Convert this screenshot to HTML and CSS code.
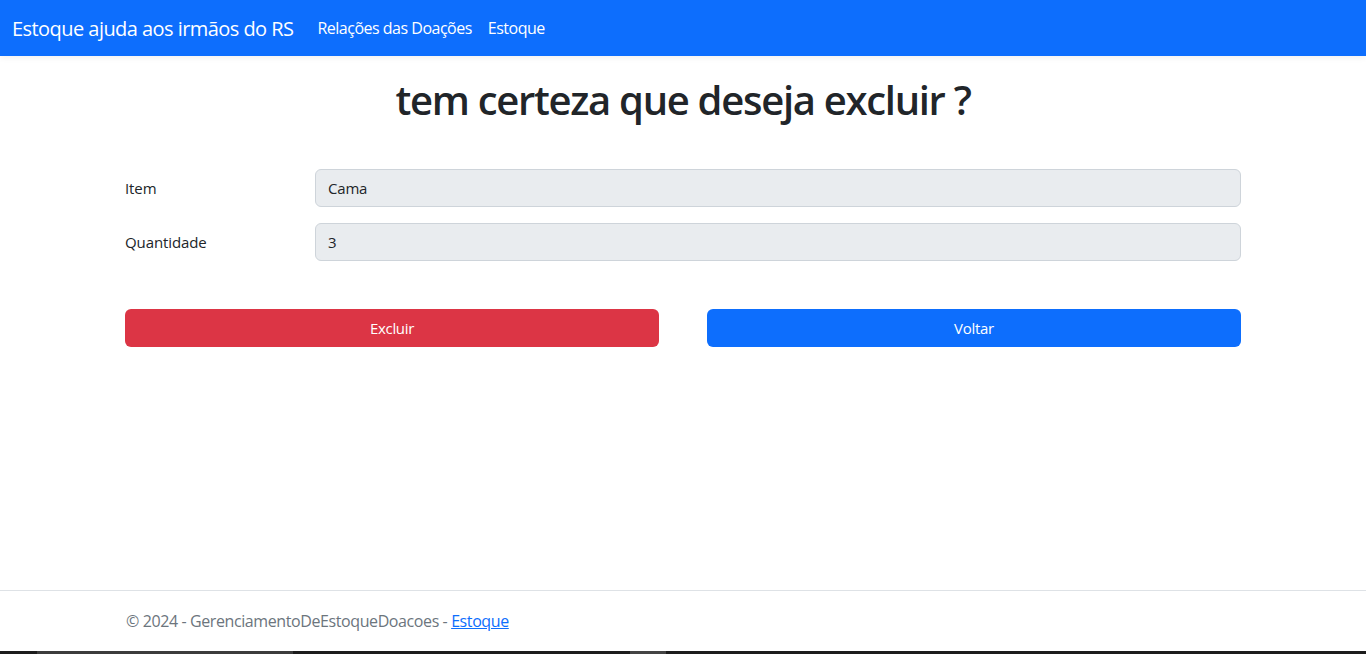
FILE: index.html
```html
<!DOCTYPE html>
<html lang="pt-br">
<head>
<meta charset="utf-8">
<title>Excluir - Estoque</title>
<link rel="stylesheet" href="styles.css">
</head>
<body>
<div class="page">
  <header class="navbar">
    <a class="brand" href="#">Estoque ajuda aos irmãos do RS</a>
    <nav class="nav">
      <a class="nav-link" href="#">Relações das Doações</a>
      <a class="nav-link" href="#">Estoque</a>
    </nav>
  </header>
  <main class="main">
    <div class="container">
      <h1 class="title">tem certeza que deseja excluir ?</h1>
      <form class="form">
        <div class="row">
          <label class="label">Item</label>
          <div class="input">Cama</div>
        </div>
        <div class="row">
          <label class="label">Quantidade</label>
          <div class="input">3</div>
        </div>
        <div class="actions">
          <button type="button" class="btn btn-danger">Excluir</button>
          <button type="button" class="btn btn-primary">Voltar</button>
        </div>
      </form>
    </div>
  </main>
  <footer class="footer">
    <div class="container footer-inner">&copy; 2024 - GerenciamentoDeEstoqueDoacoes - <a href="#" class="footer-link">Estoque</a></div>
  </footer>
  <div class="taskbar"><span class="tb-seg tb-a"></span><span class="tb-seg tb-b"></span></div>
</div>
</body>
</html>
```
FILE: styles.css
```css
* { box-sizing: border-box; }
html, body { margin: 0; padding: 0; }
body {
  font-family: "Open Sans", "Noto Sans", "Liberation Sans", sans-serif;
  font-size: 16px;
  color: #212529;
  background: #fff;
}
.page {
  height: 654px;
  display: flex;
  flex-direction: column;
  overflow: hidden;
}
.navbar {
  height: 56px;
  flex: none;
  background: #0d6efd;
  display: flex;
  align-items: center;
  padding: 0 12px;
  box-shadow: 0 2px 6px rgba(0,0,0,0.06);
  position: relative;
  z-index: 1;
}
.brand {
  color: #fff;
  text-decoration: none;
  font-size: 20px;
  margin-right: 16px;
  letter-spacing: -0.55px;
}
.nav { display: flex; }
.nav-link {
  color: #fff;
  text-decoration: none;
  padding: 8px;
  font-size: 16px;
  letter-spacing: -0.5px;
}
.main { flex: 1; }
.container {
  width: 1140px;
  margin: 0 auto;
  padding: 0 12px;
}
.title {
  margin: 20px 0 45px;
  text-align: center;
  font-size: 40px;
  font-weight: 600;
  line-height: 48px;
  letter-spacing: -1.3px;
}
.form { display: flex; flex-direction: column; }
.row {
  display: flex;
  align-items: center;
  margin-bottom: 16px;
}
.label {
  width: 190px;
  flex: none;
  font-size: 15px;
  letter-spacing: -0.1px;
}
.input {
  flex: 1;
  height: 38px;
  background: #e9ecef;
  border: 1px solid #ced4da;
  border-radius: 6px;
  padding: 0 12px;
  display: flex;
  align-items: center;
  font-size: 15px;
  letter-spacing: -0.2px;
}
.actions {
  display: flex;
  gap: 48px;
  margin-top: 32px;
}
.btn {
  flex: 1;
  height: 38px;
  border: 0;
  border-radius: 6px;
  color: #fff;
  font-family: inherit;
  font-size: 15px;
  letter-spacing: -0.3px;
}
.btn-danger { background: #dc3545; }
.btn-primary { background: #0d6efd; }
.footer {
  flex: none;
  height: 61px;
  border-top: 1px solid #dee2e6;
  color: #6c757d;
}
.footer-inner {
  line-height: 60px;
  padding-left: 13px;
  font-size: 16px;
  letter-spacing: -0.4px;
}
.footer-link { color: #0d6efd; }
.taskbar {
  flex: none;
  height: 3px;
  background: #1c1c1c;
  position: relative;
}
.tb-seg { position: absolute; top: 0; height: 3px; }
.tb-a { left: 37px; width: 256px; background: #3c3c3c; }
.tb-b { left: 630px; width: 36px; background: #444; }
```
